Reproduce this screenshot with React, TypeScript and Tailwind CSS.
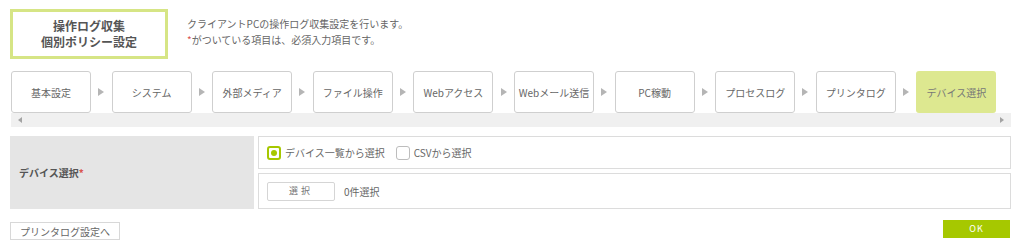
import React from "react";

const font = { fontFamily: '"Noto Sans CJK JP", "Noto Sans", sans-serif' };

const tabs = [
  "基本設定",
  "システム",
  "外部メディア",
  "ファイル操作",
  "Webアクセス",
  "Webメール送信",
  "PC稼動",
  "プロセスログ",
  "プリンタログ",
  "デバイス選択",
];

function Arrow() {
  return (
    <div className="w-[20.6px] flex items-center justify-center shrink-0">
      <svg width="6" height="8" viewBox="0 0 6 8">
        <path d="M0 0 L6 4 L0 8 Z" fill="#b5b5b5" />
      </svg>
    </div>
  );
}

export default function App() {
  return (
    <div className="w-[1024px] h-[250px] bg-white text-[#666] overflow-hidden" style={font}>
      {/* header */}
      <div className="flex pt-[9px] pl-[10px]">
        <div className="w-[158px] h-[50px] border-[3px] border-[#d6e585] flex flex-col items-center justify-center text-[12px] leading-[16px] font-bold text-[#555]">
          <div>操作ログ収集</div>
          <div>個別ポリシー設定</div>
        </div>
        <div className="ml-[19px] mt-[7px] text-[10px] leading-[16px] text-[#666]">
          <div>クライアントPCの操作ログ収集設定を行います。</div>
          <div>
            <span className="text-[#d9534f]">*</span>がついている項目は、必須入力項目です。
          </div>
        </div>
      </div>

      {/* tabs */}
      <div className="mt-[12px] ml-[11px] flex">
        {tabs.map((t, i) => (
          <React.Fragment key={t}>
            <div
              className={
                "w-[80px] h-[42px] shrink-0 rounded-[3px] flex items-center justify-center text-[10px] " +
                (i === tabs.length - 1
                  ? "bg-[#dde890] text-[#777]"
                  : "bg-white border border-[#cfcfcf] text-[#666]")
              }
            >
              {t}
            </div>
            {i < tabs.length - 1 && <Arrow />}
          </React.Fragment>
        ))}
      </div>

      {/* scrollbar */}
      <div className="ml-[11px] w-[1000px] h-[14px] bg-[#f0f0f0] flex items-center justify-between px-[7px]">
        <svg width="4" height="6" viewBox="0 0 4 6">
          <path d="M4 0 L0 3 L4 6 Z" fill="#a3a3a3" />
        </svg>
        <svg width="4" height="6" viewBox="0 0 4 6">
          <path d="M0 0 L4 3 L0 6 Z" fill="#a3a3a3" />
        </svg>
      </div>

      {/* form */}
      <div className="mt-[9px] ml-[10px] flex gap-[4px]">
        <div className="w-[244px] h-[73px] bg-[#e5e5e5] flex items-center pl-[9px] text-[10px] font-bold text-[#555]">
          デバイス選択<span className="text-[#d9534f]">*</span>
        </div>
        <div className="w-[753px] flex flex-col gap-[4px]">
          <div className="h-[33px] border border-[#dcdcdc] flex items-center pl-[8px] text-[10px] text-[#666]">
            <div className="w-[14px] h-[14px] rounded-[3px] border-2 border-[#a6c800] flex items-center justify-center">
              <div className="w-[6px] h-[6px] rounded-full bg-[#a6c800]" />
            </div>
            <span className="ml-[4px]">デバイス一覧から選択</span>
            <div className="ml-[11px] w-[14px] h-[14px] rounded-[3px] border border-[#bdbdbd]" />
            <span className="ml-[4px]">CSVから選択</span>
          </div>
          <div className="h-[36px] border border-[#dcdcdc] flex items-center pl-[8px] text-[10px] text-[#666]">
            <div className="w-[68px] h-[19px] border border-[#d5d5d5] rounded-[2px] flex items-center justify-center text-[9px] text-[#777] tracking-[3px]">
              選択
            </div>
            <span className="ml-[9px]">0件選択</span>
          </div>
        </div>
      </div>

      {/* bottom */}
      <div className="mt-[11px] ml-[10px] w-[1000px] flex justify-between items-start">
        <div className="w-[110px] h-[18px] border border-[#d8d8d8] flex items-center justify-center text-[10px] text-[#666] mt-[2px]">
          プリンタログ設定へ
        </div>
        <div className="w-[67px] h-[18px] bg-[#a6c800] flex items-center justify-center text-[9px] text-white tracking-[1px]">
          OK
        </div>
      </div>
    </div>
  );
}
